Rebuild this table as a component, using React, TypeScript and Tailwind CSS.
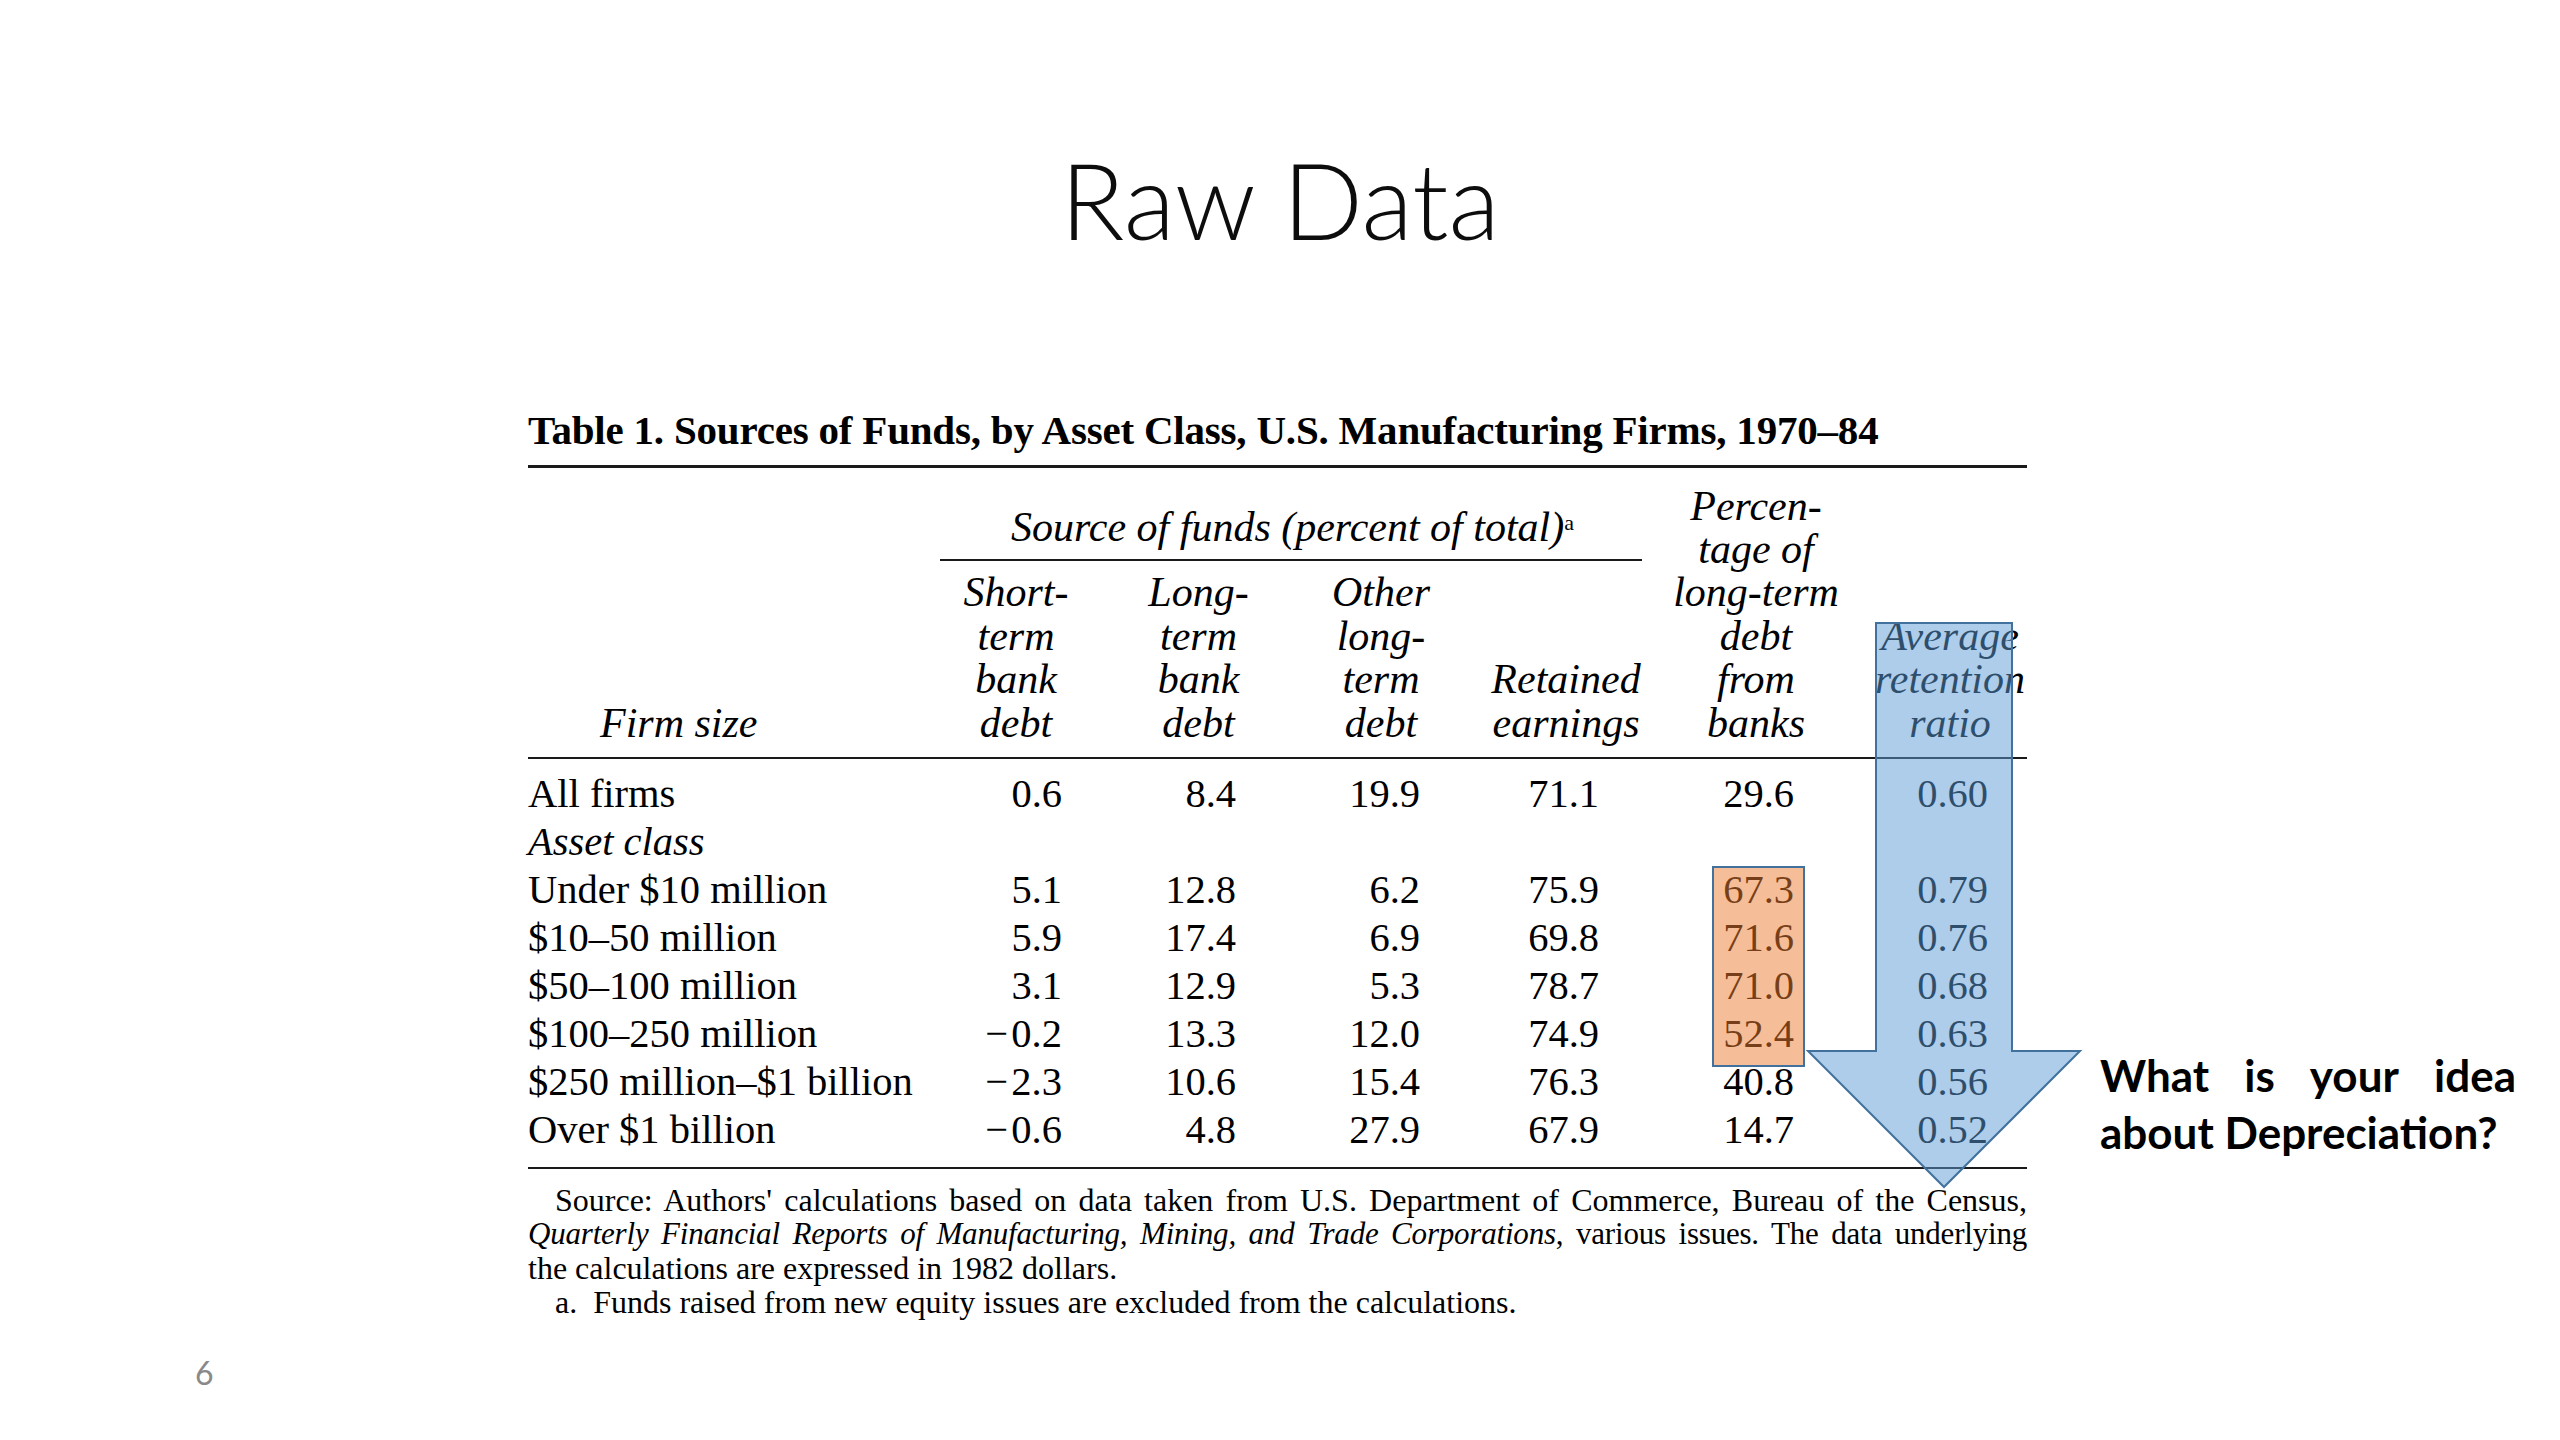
import type { ReactNode } from "react";

type Row = { label: string; italic?: boolean; v?: string[] };

const rows: Row[] = [
  { label: "All firms", v: ["0.6", "8.4", "19.9", "71.1", "29.6", "0.60"] },
  { label: "Asset class", italic: true },
  { label: "Under $10 million", v: ["5.1", "12.8", "6.2", "75.9", "67.3", "0.79"] },
  { label: "$10–50 million", v: ["5.9", "17.4", "6.9", "69.8", "71.6", "0.76"] },
  { label: "$50–100 million", v: ["3.1", "12.9", "5.3", "78.7", "71.0", "0.68"] },
  { label: "$100–250 million", v: ["−\u200A0.2", "13.3", "12.0", "74.9", "52.4", "0.63"] },
  { label: "$250 million–$1 billion", v: ["−\u200A2.3", "10.6", "15.4", "76.3", "40.8", "0.56"] },
  { label: "Over $1 billion", v: ["−\u200A0.6", "4.8", "27.9", "67.9", "14.7", "0.52"] },
];

// right padding per numeric column, so figures line up like the scan
const pads = ["pr-[45px]", "pr-[54px]", "pr-[52px]", "pr-[61px]", "pr-[58px]", "pr-[60px]"];

function Head({ lines, w }: { lines: string[]; w: string }) {
  return (
    <div className={`${w} text-center`}>
      {lines.map((l) => (
        <div key={l}>{l}</div>
      ))}
    </div>
  );
}

function FootLine({ children, indent, last, className = "" }: { children: ReactNode; indent?: boolean; last?: boolean; className?: string }) {
  return (
    <div className={`${indent ? "pl-[27px]" : ""} ${last ? "" : "text-justify [text-align-last:justify]"} ${className}`}>
      {children}
    </div>
  );
}

function Table() {
  return (
    <div className="w-[1520px] font-['Liberation_Serif',serif] text-black">
      <div className="w-[1499px] text-[41px] font-bold leading-[48px] tracking-[-0.2px]">
        Table 1. Sources of Funds, by Asset Class, U.S. Manufacturing Firms, 1970–84
      </div>
      <div className="mt-[11px] h-[3px] w-[1499px] bg-[#1a1a1a]" />

      {/* column heads */}
      <div className="flex h-[289px] items-end pb-[12px] text-[42px] italic leading-[43.4px]">
        <div className="w-[397px] pl-[72px]">Firm size</div>
        <div className="flex w-[735px] flex-col">
          <div className="text-center">
            Source of funds (percent of total)<sup className="not-italic text-[22px]">a</sup>
          </div>
          <div className="my-[10px] ml-[15px] mr-[18px] h-[2px] bg-[#1a1a1a]" />
          <div className="flex items-end">
            <Head w="w-[182px]" lines={["Short-", "term", "bank", "debt"]} />
            <Head w="w-[183px]" lines={["Long-", "term", "bank", "debt"]} />
            <Head w="w-[182px]" lines={["Other", "long-", "term", "debt"]} />
            <Head w="w-[188px]" lines={["Retained", "earnings"]} />
          </div>
        </div>
        <Head w="w-[192px]" lines={["Percen-", "tage of", "long-term", "debt", "from", "banks"]} />
        <Head w="w-[196px]" lines={["Average", "retention", "ratio"]} />
      </div>
      <div className="h-[2px] w-[1499px] bg-[#1a1a1a]" />

      {/* body */}
      <div className="pb-[13px] pt-[11px] text-[40.5px] leading-[48px]">
        {rows.map((r) => (
          <div key={r.label} className="grid grid-cols-[397px_182px_183px_182px_188px_192px_196px]">
            <div className={r.italic ? "italic" : ""}>{r.label}</div>
            {r.v?.map((n, i) => (
              <div key={i} className={`text-right ${pads[i]}`}>
                {n}
              </div>
            ))}
          </div>
        ))}
      </div>
      <div className="h-[2px] w-[1499px] bg-[#1a1a1a]" />

      {/* source notes */}
      <div className="mt-[14px] w-[1499px] text-[32px] leading-[34px]">
        <FootLine indent>
          Source: Authors' calculations based on data taken from U.S. Department of Commerce, Bureau of the Census,
        </FootLine>
        <FootLine className="text-[31px] tracking-[-0.2px]">
          <i>Quarterly Financial Reports of Manufacturing, Mining, and Trade Corporations</i>, various issues. The data
          underlying
        </FootLine>
        <FootLine last>the calculations are expressed in 1982 dollars.</FootLine>
        <FootLine indent last>
          a.&nbsp; Funds raised from new equity issues are excluded from the calculations.
        </FootLine>
      </div>
    </div>
  );
}

export default function App() {
  return (
    <div className="relative h-[1440px] w-[2560px] overflow-hidden bg-white">
      <h1 className="pt-[146px] text-center font-['Lato',sans-serif] text-[106px] font-light leading-none text-[#0d0d0d]">
        Raw Data
      </h1>

      <div className="mt-[154px] flex">
        <div className="ml-[528px]">
          <Table />
        </div>
        <div className="ml-[52px] mt-[641px] w-[416px] font-['Lato',sans-serif] text-[44px] font-bold leading-[57px] text-black">
          <div className="flex justify-between">
            <span>What</span>
            <span>is</span>
            <span>your</span>
            <span>idea</span>
          </div>
          <div>about Depreciation?</div>
        </div>
      </div>

      <div className="mt-[38px] pl-[195px] font-['Lato',sans-serif] text-[32px] leading-none text-[#898989]">6</div>

      {/* highlight shapes laid over the scanned table */}
      <svg className="pointer-events-none absolute inset-0" width="2560" height="1440" viewBox="0 0 2560 1440">
        <rect x="1713" y="867" width="91" height="199" fill="#ed7d31" fillOpacity="0.5" stroke="#41719c" strokeWidth="2" />
        <polygon
          points="1876,623 2012,623 2012,1051 2080,1051 1944,1187 1808,1051 1876,1051"
          fill="#5b9bd5"
          fillOpacity="0.5"
          stroke="#41719c"
          strokeWidth="2"
        />
      </svg>
    </div>
  );
}
